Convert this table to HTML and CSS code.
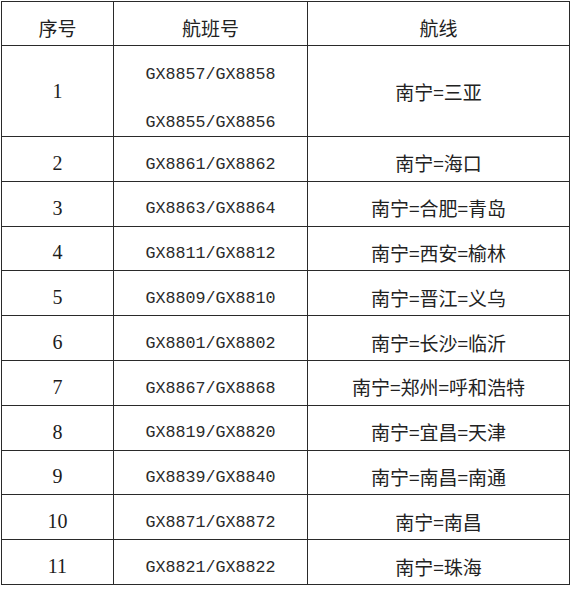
FILE: index.html
```html
<!DOCTYPE html>
<html lang="zh">
<head>
<meta charset="utf-8">
<link rel="stylesheet" href="styles.css">
</head>
<body>
<table class="flights">
  <colgroup>
    <col class="c-no">
    <col class="c-code">
    <col class="c-route">
  </colgroup>
  <thead>
    <tr class="head">
      <th class="cjk">序号</th>
      <th class="cjk">航班号</th>
      <th class="cjk">航线</th>
    </tr>
  </thead>
  <tbody>
    <tr class="tall">
      <td class="num">1</td>
      <td class="code"><div class="pair"><span>GX8857/GX8858</span><span>GX8855/GX8856</span></div></td>
      <td class="cjk">南宁=三亚</td>
    </tr>
    <tr><td class="num">2</td><td class="code">GX8861/GX8862</td><td class="cjk">南宁=海口</td></tr>
    <tr><td class="num">3</td><td class="code">GX8863/GX8864</td><td class="cjk">南宁=合肥=青岛</td></tr>
    <tr><td class="num">4</td><td class="code">GX8811/GX8812</td><td class="cjk">南宁=西安=榆林</td></tr>
    <tr><td class="num">5</td><td class="code">GX8809/GX8810</td><td class="cjk">南宁=晋江=义乌</td></tr>
    <tr><td class="num">6</td><td class="code">GX8801/GX8802</td><td class="cjk">南宁=长沙=临沂</td></tr>
    <tr><td class="num">7</td><td class="code">GX8867/GX8868</td><td class="cjk">南宁=郑州=呼和浩特</td></tr>
    <tr><td class="num">8</td><td class="code">GX8819/GX8820</td><td class="cjk">南宁=宜昌=天津</td></tr>
    <tr><td class="num">9</td><td class="code">GX8839/GX8840</td><td class="cjk">南宁=南昌=南通</td></tr>
    <tr><td class="num">10</td><td class="code">GX8871/GX8872</td><td class="cjk">南宁=南昌</td></tr>
    <tr><td class="num">11</td><td class="code">GX8821/GX8822</td><td class="cjk">南宁=珠海</td></tr>
  </tbody>
</table>
</body>
</html>
```

FILE: styles.css
```css
html, body {
  margin: 0;
  padding: 0;
  background: #ffffff;
}

body {
  padding: 1px 0 0 1px;
  color: #1c1c1c;
}

.flights {
  border-collapse: collapse;
  table-layout: fixed;
  width: 569px;
}

.c-no { width: 112px; }
.c-code { width: 194px; }
.c-route { width: 262px; }

.flights th,
.flights td {
  border: 1px solid #2a2a2a;
  text-align: center;
  vertical-align: middle;
  padding: 8px 0 0 0;
  font-weight: normal;
  line-height: 1;
}

.flights td.code { padding-top: 12px; }

.flights tr { height: 44.8px; }
.flights tr.head { height: 44px; }
.flights tr.tall { height: 91px; }

.flights tr.tall td { padding-top: 0; }
.flights tr.tall td.code { padding-top: 17px; }

.cjk {
  font-family: "Noto Sans CJK SC", "Noto Sans", sans-serif;
  font-size: 19px;
  color: #222;
}

.num {
  font-family: "Liberation Serif", serif;
  font-size: 20px;
}

.code {
  font-family: "Liberation Mono", monospace;
  font-size: 16.7px;
  color: #2a2a2a;
}

.pair {
  display: flex;
  flex-direction: column;
  align-items: center;
  gap: 31px;
}
```
